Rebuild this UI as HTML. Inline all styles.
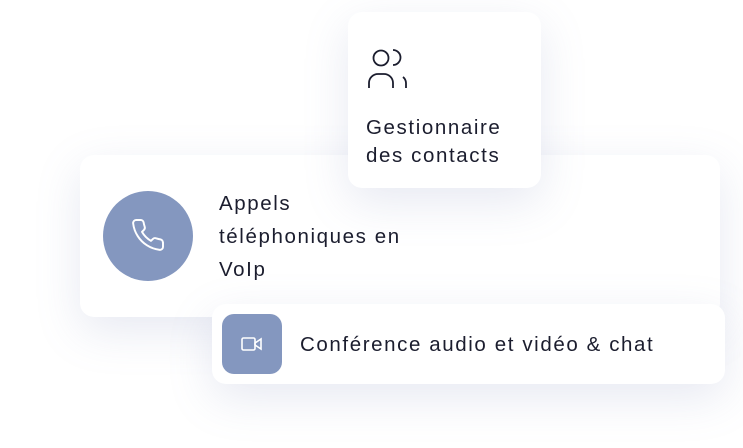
<!DOCTYPE html>
<html><head><meta charset="utf-8"><style>
body{margin:0;width:743px;height:448px;background:#fff;position:relative;overflow:hidden;font-family:"Liberation Sans",sans-serif;color:#1b1d2e}
.c{position:absolute;background:#fff;border-radius:14px;box-shadow:0 14px 45px rgba(120,135,185,0.18)}
.t{position:absolute;font-size:20.5px;line-height:33px;letter-spacing:1.6px}
</style></head><body>
<div class="c" style="left:80px;top:155px;width:640px;height:162px"></div>
<div class="c" style="left:348px;top:12px;width:193px;height:176px"></div>
<div class="c" style="left:212px;top:304px;width:513px;height:80px"></div>
<svg style="position:absolute;left:366px;top:46px" width="48" height="44" viewBox="0 0 48 44" fill="none" stroke="#1b1d2e" stroke-width="1.8">
<circle cx="15" cy="12" r="7.5"/><path d="M3 42v-5a9 9 0 0 1 9-9h6a9 9 0 0 1 9 9v5"/><path d="M27 4a7.5 7.5 0 0 1 0 15"/><path d="M40 42v-5a8 8 0 0 0-3-6"/></svg>
<div class="t" style="left:366px;top:114px;line-height:28px">Gestionnaire<br>des contacts</div>
<div style="position:absolute;left:103px;top:191px;width:90px;height:90px;border-radius:50%;background:#8497bf"></div>
<svg style="position:absolute;left:130px;top:217px" width="36" height="36" viewBox="0 0 24 24" fill="none" stroke="#fff" stroke-width="1.3" stroke-linejoin="round"><path d="M22 16.9v3a2 2 0 0 1-2.2 2 19.8 19.8 0 0 1-8.6-3.1 19.5 19.5 0 0 1-6-6A19.8 19.8 0 0 1 2.1 4.2 2 2 0 0 1 4.1 2h3a2 2 0 0 1 2 1.7c.1.9.4 1.9.7 2.8a2 2 0 0 1-.5 2.1L8 9.9a16 16 0 0 0 6 6l1.3-1.3a2 2 0 0 1 2.1-.4c.9.3 1.8.6 2.8.7a2 2 0 0 1 1.7 2z"/></svg>
<div class="t" style="left:219px;top:187px">Appels<br>téléphoniques en<br>VoIp</div>
<div style="position:absolute;left:222px;top:314px;width:60px;height:60px;border-radius:12px;background:#8497bf"></div>
<svg style="position:absolute;left:240px;top:335px" width="24" height="18" viewBox="0 0 24 18" fill="none" stroke="#fff" stroke-width="1.6"><rect x="2" y="3" width="13" height="12" rx="1.5"/><path d="M15 8l6-4v10l-6-4z"/></svg>
<div class="t" style="left:300px;top:328px">Conférence audio et vidéo &amp; chat</div>
</body></html>
